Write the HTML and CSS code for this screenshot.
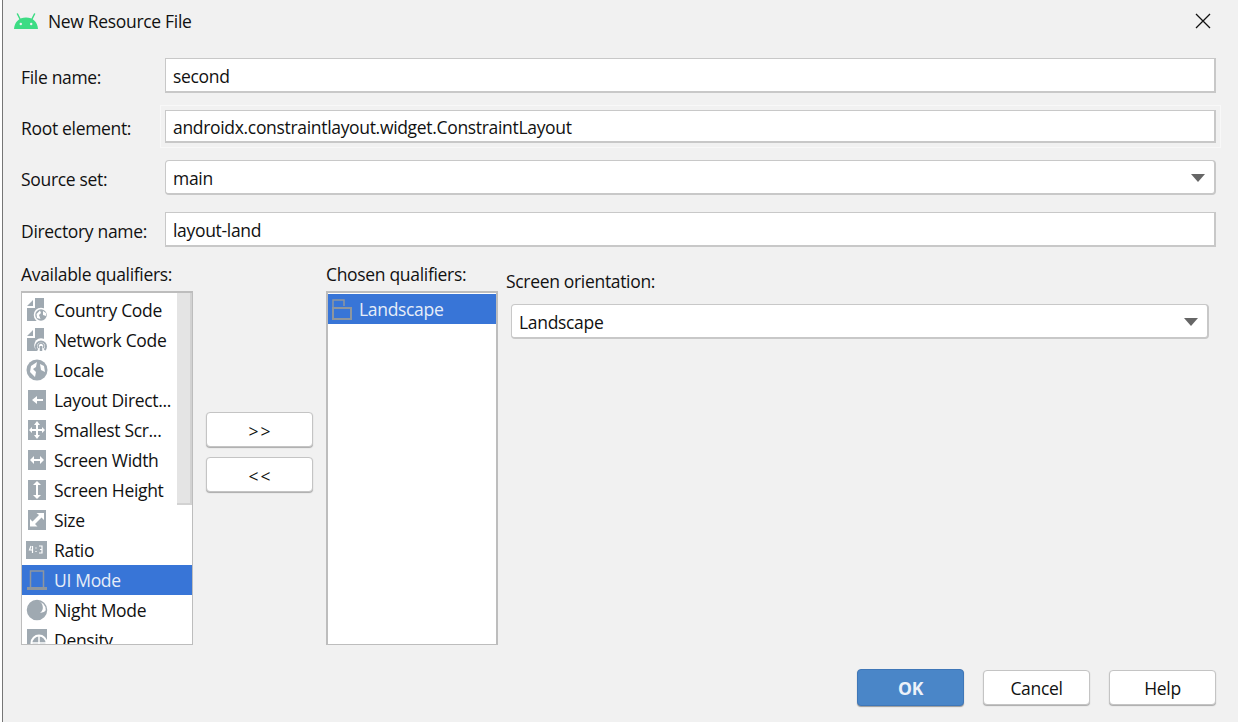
FILE: index.html
```html
<!DOCTYPE html>
<html lang="en">
<head>
    <meta charset="UTF-8">
    <title>New Resource File</title>
    <link rel="stylesheet" href="styles.css">
</head>
<body>
    <div class="edge"></div>
    <div class="dialog">
        <header class="title-bar">
            <svg class="android-logo" width="24" height="16" viewBox="0 0 24 16">
                <path d="M0 16 C0.500 9 5 4.500 12 4.500 C19 4.500 23.500 9 24 16 Z" fill="#3ddc84"/>
                <path d="M6 6 L3.500 1 M18 6 L20.500 1" stroke="#3ddc84" stroke-width="1.500" stroke-linecap="round"/>
                <circle cx="6.800" cy="11" r="1.200" fill="#f1f1f1"/>
                <circle cx="17.200" cy="11" r="1.200" fill="#f1f1f1"/>
            </svg>
            <span class="title-text">New Resource File</span>
            <svg class="close-icon" width="16" height="16" viewBox="0 0 16 16">
                <path d="M1 1 L15 15 M15 1 L1 15" stroke="#111" stroke-width="1.300" fill="none"/>
            </svg>
        </header>

        <div class="form-row">
            <label class="form-label">File name:</label>
            <div class="field">second</div>
        </div>
        <div class="form-row form-row-root">
            <label class="form-label">Root element:</label>
            <div class="field">androidx.constraintlayout.widget.ConstraintLayout</div>
        </div>
        <div class="form-row">
            <label class="form-label">Source set:</label>
            <div class="field field-select">main<span class="arrow"></span></div>
        </div>
        <div class="form-row form-row-dir">
            <label class="form-label">Directory name:</label>
            <div class="field">layout-land</div>
        </div>

        <section class="qualifiers">
            <div class="col-available">
                <div class="col-label">Available qualifiers:</div>
                <div class="list">
                    <ul class="list-items">
                        <li class="item">
                            <svg class="icon" viewBox="0 0 22 24"><path d="M1 8 L7 2 V8 Z M9 0 H18 V14 H12 V23 H1 V10 H9 Z" fill="#9fa9b1"/><circle cx="15" cy="17" r="6.500" fill="#9fa9b1" stroke="#fff" stroke-width="1.500"/><path d="M10.500 16 L14 12.500 L15 15 L13 17 L14.500 21 L11 20 Z M17 13 L20 15 L20 18 L17 17 Z" fill="#fff"/></svg>
                            Country Code
                        </li>
                        <li class="item">
                            <svg class="icon" viewBox="0 0 22 24"><path d="M1 8 L7 2 V8 Z M9 0 H18 V14 H12 V23 H1 V10 H9 Z" fill="#9fa9b1"/><circle cx="15" cy="17" r="6.800" fill="#fff"/><path d="M11.500 22 A5 5 0 1 1 18.500 22" fill="none" stroke="#9fa9b1" stroke-width="2"/><path d="M13 20 A2.800 2.800 0 1 1 17 20" fill="none" stroke="#9fa9b1" stroke-width="1.200"/><path d="M15 23 V18" stroke="#9fa9b1" stroke-width="2.500"/></svg>
                            Network Code
                        </li>
                        <li class="item">
                            <svg class="icon" viewBox="0 0 22 24"><circle cx="11" cy="12" r="10.500" fill="#9fa9b1"/><path d="M5 8 L11 4 L10 9 L7 11 L10 14 L9 19 L4 14 Z M14 6 L18 8 L19 14 L15 12 Z" fill="#fff"/></svg>
                            Locale
                        </li>
                        <li class="item">
                            <svg class="icon" viewBox="0 0 22 24"><rect x="2" y="2" width="18" height="20" fill="#9fa9b1"/><path d="M6 12 L11 8 V11 H17 V13 H11 V16 Z" fill="#fff"/></svg>
                            Layout Direct...
                        </li>
                        <li class="item">
                            <svg class="icon" viewBox="0 0 22 24"><rect x="2" y="2" width="18" height="20" fill="#9fa9b1"/><path d="M11 3 L14 7 H12 V11 H16 V9 L19 12 L16 15 V13 H12 V17 H14 L11 21 L8 17 H10 V13 H6 V15 L3 12 L6 9 V11 H10 V7 H8 Z" fill="#fff"/></svg>
                            Smallest Scr...
                        </li>
                        <li class="item">
                            <svg class="icon" viewBox="0 0 22 24"><rect x="2" y="2" width="18" height="20" fill="#9fa9b1"/><path d="M4 12 L8 8 V11 H14 V8 L18 12 L14 16 V13 H8 V16 Z" fill="#fff"/></svg>
                            Screen Width
                        </li>
                        <li class="item">
                            <svg class="icon" viewBox="0 0 22 24"><rect x="2" y="2" width="18" height="20" fill="#9fa9b1"/><path d="M11 3 L15 7 H12 V17 H15 L11 21 L7 17 H10 V7 H7 Z" fill="#fff"/></svg>
                            Screen Height
                        </li>
                        <li class="item">
                            <svg class="icon" viewBox="0 0 22 24"><rect x="2" y="2" width="18" height="20" fill="#9fa9b1"/><path d="M18 5 V12 L15.500 9.500 L9 16 L11.500 18.500 H4 V11 L6.500 13.500 L13 7 L10.500 5 Z" fill="#fff"/></svg>
                            Size
                        </li>
                        <li class="item">
                            <svg class="icon" viewBox="0 0 22 24"><rect x="0" y="3" width="21" height="18" fill="#9fa9b1"/><path d="M5 8 L3.500 12 H7 M6.500 8 V15 M10 9.500 V10.500 M10 13 V14 M13 8 H16 V15 H13 M14 11.500 H16" fill="none" stroke="#fff" stroke-width="1.200"/></svg>
                            Ratio
                        </li>
                        <li class="item item-selected">
                            <svg class="icon" viewBox="0 0 22 24"><path d="M4.500 19 V3 H17.500 V19" fill="none" stroke="#8e969e" stroke-width="1.500"/><rect x="1" y="19" width="20" height="3" fill="#8e969e"/></svg>
                            UI Mode
                        </li>
                        <li class="item">
                            <svg class="icon" viewBox="0 0 22 24"><circle cx="11" cy="12" r="9.500" fill="none" stroke="#9fa9b1" stroke-width="1.500"/><path d="M11 2.500 A9.500 9.500 0 1 0 20.500 12 A9 9 0 0 1 14 15 A7 7 0 0 0 11 2.500 Z" fill="#9fa9b1"/></svg>
                            Night Mode
                        </li>
                        <li class="item">
                            <svg class="icon" viewBox="0 0 22 24"><rect x="1" y="1" width="20" height="22" fill="#9fa9b1"/><circle cx="13" cy="15" r="7.500" fill="#9fa9b1" stroke="#fff" stroke-width="2"/><path d="M13 8 V22 M6 15 H20" stroke="#fff" stroke-width="1.500"/></svg>
                            Density
                        </li>
                    </ul>
                    <div class="scroll-thumb"></div>
                </div>
            </div>

            <div class="move-buttons">
                <button class="btn btn-move">&gt;&gt;</button>
                <button class="btn btn-move">&lt;&lt;</button>
            </div>

            <div class="col-chosen">
                <div class="col-label">Chosen qualifiers:</div>
                <div class="list list-chosen">
                    <ul class="list-items">
                        <li class="item item-selected">
                            <svg class="icon" viewBox="0 0 22 24"><path d="M2 12 V3 H13 V9" fill="none" stroke="#8e969e" stroke-width="1.500"/><rect x="2" y="11" width="18" height="11" fill="none" stroke="#8e969e" stroke-width="2"/></svg>
                            Landscape
                        </li>
                    </ul>
                </div>
            </div>

            <div class="col-option">
                <div class="option-label">Screen orientation:</div>
                <div class="field field-select field-option">Landscape<span class="arrow"></span></div>
            </div>
        </section>

        <footer class="actions">
            <button class="btn btn-ok">OK</button>
            <button class="btn btn-action">Cancel</button>
            <button class="btn btn-action">Help</button>
        </footer>
    </div>
</body>
</html>
```

FILE: styles.css
```css
html, body {
    margin: 0;
    height: 100%;
}

body {
    display: flex;
    overflow: hidden;
    font-family: "Open Sans", "Noto Sans", sans-serif;
    font-size: 17.5px;
    letter-spacing: -0.32px;
    color: #111;
    background-color: #f1f1f1;
}

.edge {
    width: 2px;
    flex: none;
    background-color: #fff;
    border-right: 1px solid #767676;
}

.dialog {
    flex: 1;
    padding: 0 22px 0 18px;
    min-width: 0;
}

.title-bar {
    display: flex;
    align-items: center;
    height: 42px;
    margin-left: -7px;
}

.android-logo {
    margin-right: 10px;
}

.title-text {
    flex: 1;
}

.close-icon {
    margin-right: 5px;
}

.form-row {
    display: flex;
    align-items: center;
    height: 36px;
    margin-top: 15px;
}

.form-row-dir {
    margin-top: 16px;
}

.form-label {
    width: 144px;
    flex: none;
    padding-top: 3px;
}

.field {
    position: relative;
    flex: 1;
    box-sizing: border-box;
    height: 35px;
    line-height: 34px;
    padding-left: 7px;
    background-color: #fff;
    border: 1px solid #c8c8c8;
    border-width: 1px 2px 2px 1px;
}

.form-row-root .field {
    height: 33px;
    line-height: 32px;
    outline: 1px solid #f8f8f8;
    outline-offset: 4px;
}

.field-select {
    border-radius: 4px;
}

.arrow {
    position: absolute;
    right: 9px;
    top: 13px;
    width: 0;
    height: 0;
    border-left: 7px solid transparent;
    border-right: 7px solid transparent;
    border-top: 8px solid #666;
}

.qualifiers {
    display: flex;
    margin-top: 16px;
}

.col-available {
    width: 172px;
    flex: none;
}

.col-label {
    height: 28px;
    line-height: 22px;
}

.list {
    position: relative;
    box-sizing: border-box;
    height: 354px;
    overflow: hidden;
    background-color: #fff;
    border: 2px solid #bdbdbd;
    border-left-width: 1px;
    border-right-width: 1px;
    border-bottom-width: 1px;
}

.list-items {
    margin: 0;
    padding: 2px 0 0;
    list-style: none;
}

.item {
    position: relative;
    z-index: 1;
    display: flex;
    align-items: center;
    height: 30px;
    white-space: nowrap;
}

.icon {
    width: 22px;
    height: 24px;
    flex: none;
    margin: 0 6px 0 4px;
}

.item-selected {
    color: #e6edf8;
    background-color: #3875d7;
}

.scroll-thumb {
    position: absolute;
    top: 0;
    right: 0;
    width: 15px;
    height: 212px;
    box-sizing: border-box;
    background-color: #e4e4e4;
    border-right: 2px solid #d2d2d2;
    border-bottom: 2px solid #d2d2d2;
}

.move-buttons {
    display: flex;
    flex-direction: column;
    gap: 10px;
    width: 107px;
    flex: none;
    margin: 149px 13px 0 13px;
}

.col-chosen {
    width: 172px;
    flex: none;
}

.list-chosen {
    border-left-width: 2px;
    border-right-width: 2px;
}

.list-chosen .list-items {
    padding-top: 1px;
}

.list-chosen .icon {
    margin-left: 3px;
}

.col-option {
    flex: 1;
    margin-left: 8px;
    margin-right: 7px;
}

.option-label {
    height: 34px;
    line-height: 22px;
    margin-top: 7px;
}

.field-option {
    margin-left: 5px;
}

.btn {
    font: inherit;
    letter-spacing: inherit;
    color: #111;
    box-sizing: border-box;
    padding: 0;
    border-radius: 4px;
    background-color: #fff;
    border: 1px solid #c4c4c4;
    box-shadow: 0 1px 1px #aaa;
}

.btn-move {
    height: 35px;
    padding-top: 2px;
    padding-left: 2px;
    letter-spacing: 2px;
}

.actions {
    display: flex;
    justify-content: flex-end;
    gap: 19px;
    margin-top: 24px;
}

.btn-ok {
    width: 107px;
    height: 37px;
    font-weight: 700;
    color: #edf2f9;
    background-color: #4a86c8;
    border-color: #3f77b8;
    box-shadow: 0 1px 1px #999;
}

.btn-action {
    width: 107px;
    height: 35px;
    margin-top: 1px;
}
```
